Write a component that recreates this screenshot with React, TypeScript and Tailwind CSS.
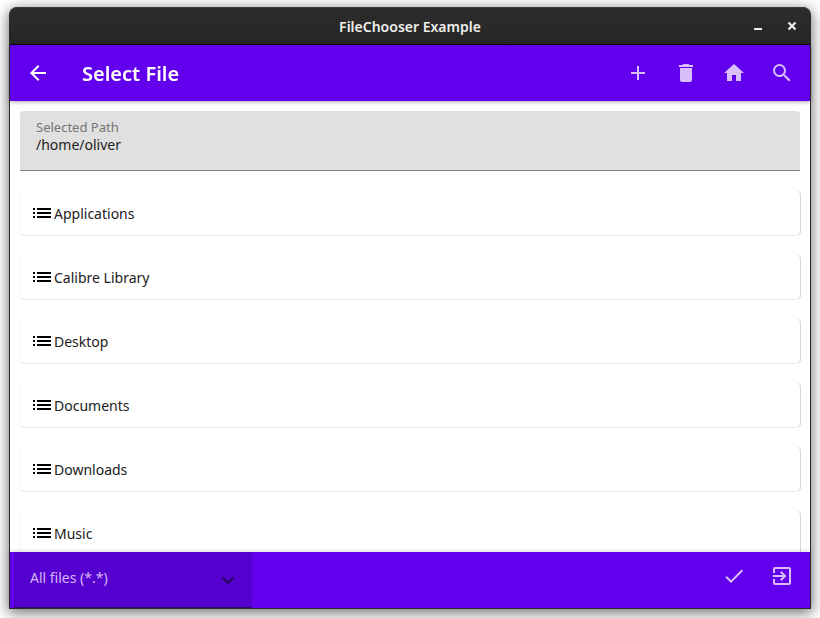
import { useState } from "react";
import type { ReactNode } from "react";
import {
  MdAdd,
  MdArrowBack,
  MdCheck,
  MdDelete,
  MdExitToApp,
  MdHome,
  MdList,
  MdSearch,
} from "react-icons/md";

const folders = [
  "Applications",
  "Calibre Library",
  "Desktop",
  "Documents",
  "Downloads",
  "Music",
];

function IconButton({ label, children }: { label: string; children: ReactNode }) {
  return (
    <button type="button" aria-label={label} className="flex size-12 items-center justify-center">
      {children}
    </button>
  );
}

function TitleBar() {
  return (
    <header className="grid h-[38px] shrink-0 grid-cols-[1fr_auto_1fr] items-center rounded-t-lg border-t border-b border-t-[#383838] border-b-[#070707] bg-linear-to-b from-[#2c2c2c] to-[#262626] text-[#eeeeec]">
      <span />
      <h1 className="pt-0.5 text-sm font-semibold">FileChooser Example</h1>
      <div className="flex items-center justify-end gap-2.5 pr-1.5">
        <button type="button" aria-label="Minimize" className="flex size-6 items-center justify-center">
          <svg viewBox="0 0 16 16" className="size-4" fill="currentColor">
            <path d="M4 10h8v2H4z" />
          </svg>
        </button>
        <button type="button" aria-label="Close" className="flex size-6 items-center justify-center">
          <svg viewBox="0 0 16 16" className="size-4" fill="none" stroke="currentColor" strokeWidth="2.2">
            <path d="M4.5 4.5l7 7M11.5 4.5l-7 7" />
          </svg>
        </button>
      </div>
    </header>
  );
}

function AppBar() {
  return (
    <div className="z-10 flex h-14 shrink-0 items-center bg-[#6200ee] px-1 text-white shadow-[0_1px_4px_rgba(0,0,0,0.35)]">
      <IconButton label="Back">
        <MdArrowBack className="size-6" />
      </IconButton>
      <h2 className="ml-5 flex-1 pt-0.5 text-xl font-semibold">Select File</h2>
      <div className="flex text-[#d8bffb]">
        <IconButton label="New folder">
          <MdAdd className="size-6" />
        </IconButton>
        <IconButton label="Delete">
          <MdDelete className="size-6" />
        </IconButton>
        <IconButton label="Home">
          <MdHome className="size-6" />
        </IconButton>
        <IconButton label="Search">
          <MdSearch className="size-6" />
        </IconButton>
      </div>
    </div>
  );
}

export default function App() {
  const [path, setPath] = useState("/home/oliver");

  return (
    <div className="flex h-screen bg-white px-[9px] pt-[7px] pb-[9px] font-['Noto_Sans',sans-serif] text-[#212121]">
      <div className="flex min-w-0 flex-1 flex-col rounded-t-lg bg-[#2b2b2b] px-px pb-px shadow-[0_3px_14px_1px_rgba(0,0,0,0.55)]">
        <TitleBar />
        <AppBar />
        <main className="min-h-0 flex-1 overflow-y-auto bg-white p-2.5 [scrollbar-width:none]">
          <div className="flex h-[60px] flex-col rounded-t-sm border-b border-[#808080] bg-[#e0e0e0] px-4 pt-2">
            <label htmlFor="path" className="text-[13px] leading-4 text-[#757575]">
              Selected Path
            </label>
            <input
              id="path"
              type="text"
              value={path}
              onChange={(event) => setPath(event.target.value)}
              className="h-5 bg-transparent text-sm outline-none"
            />
          </div>
          <ul className="mt-5 flex flex-col gap-5">
            {folders.map((name) => (
              <li key={name}>
                <button
                  type="button"
                  className="flex h-11 w-full items-center rounded-sm bg-white px-2.5 text-left text-sm shadow-[1px_0_0_rgba(0,0,0,0.16),0_1px_0_rgba(0,0,0,0.08),-1px_0_0_rgba(0,0,0,0.03)]"
                >
                  <MdList className="size-6 text-black" />
                  <span className="pt-0.5">{name}</span>
                </button>
              </li>
            ))}
          </ul>
        </main>
        <footer className="z-10 flex h-14 shrink-0 items-start justify-between bg-[#6200ee] px-1 shadow-[0_-1px_4px_rgba(0,0,0,0.15)]">
          <div className="grid h-full w-[238px] items-center rounded-t-sm border-b border-[#270a6b] bg-[#5600d0]">
            <select
              aria-label="File type"
              className="col-start-1 row-start-1 h-full w-full appearance-none bg-transparent px-4 pb-1 text-sm text-[#d4b8f8] outline-none"
            >
              <option>All files (*.*)</option>
            </select>
            <svg
              viewBox="0 0 24 24"
              className="pointer-events-none col-start-1 row-start-1 mr-3 size-6 justify-self-end"
              fill="none"
              stroke="#25045c"
              strokeWidth="2"
            >
              <path d="M6.7 9.7L12 15l5.3-5.3" />
            </svg>
          </div>
          <div className="flex text-[#d8bffb]">
            <IconButton label="Confirm">
              <MdCheck className="size-6" />
            </IconButton>
            <IconButton label="Exit">
              <MdExitToApp className="size-6" />
            </IconButton>
          </div>
        </footer>
      </div>
    </div>
  );
}
